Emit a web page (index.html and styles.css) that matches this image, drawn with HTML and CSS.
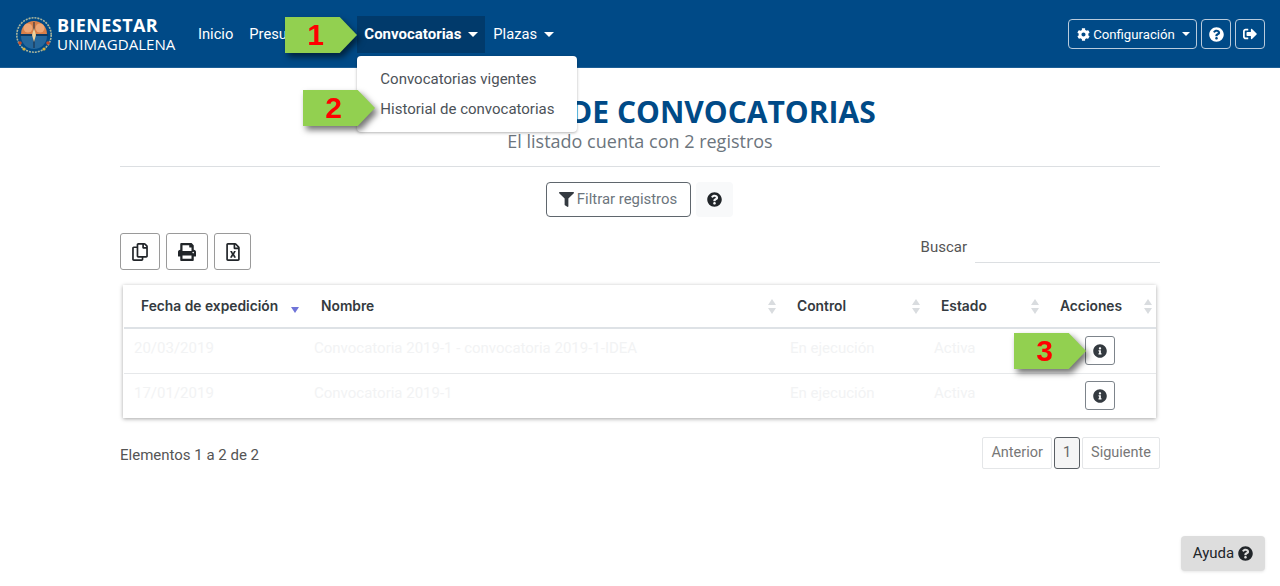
FILE: index.html
```html
<!DOCTYPE html>
<html lang="es">
<head>
<meta charset="utf-8">
<title>Historial de convocatorias</title>
<link rel="stylesheet" href="styles.css">
</head>
<body>
<svg class="defs" width="0" height="0" aria-hidden="true">
  <symbol id="i-question" viewBox="0 0 512 512"><path d="M504 256c0 136.997-111.043 248-248 248S8 392.997 8 256C8 119.083 119.043 8 256 8s248 111.083 248 248zM262.655 90c-54.497 0-89.255 22.957-116.549 63.758-3.536 5.286-2.353 12.415 2.715 16.258l34.699 26.31c5.205 3.947 12.621 3.008 16.665-2.122 17.864-22.658 30.113-35.797 57.303-35.797 20.429 0 45.698 13.148 45.698 32.958 0 14.976-12.363 22.667-32.534 33.976C247.128 238.528 216 254.941 216 296v4c0 6.627 5.373 12 12 12h56c6.627 0 12-5.373 12-12v-1.333c0-28.462 83.186-29.647 83.186-106.667 0-58.002-60.165-102-116.531-102zM256 338c-25.365 0-46 20.635-46 46 0 25.364 20.635 46 46 46s46-20.636 46-46c0-25.365-20.635-46-46-46z"/></symbol>
  <symbol id="i-info" viewBox="0 0 512 512"><path d="M256 8C119.043 8 8 119.083 8 256c0 136.997 111.043 248 248 248s248-111.003 248-248C504 119.083 392.957 8 256 8zm0 110c23.196 0 42 18.804 42 42s-18.804 42-42 42-42-18.804-42-42 18.804-42 42-42zm56 254c0 6.627-5.373 12-12 12h-88c-6.627 0-12-5.373-12-12v-24c0-6.627 5.373-12 12-12h12v-64h-12c-6.627 0-12-5.373-12-12v-24c0-6.627 5.373-12 12-12h64c6.627 0 12 5.373 12 12v100h12c6.627 0 12 5.373 12 12v24z"/></symbol>
</svg>

<header class="navbar">
  <a class="brand">
    <svg class="logo" viewBox="0 0 38 38" aria-hidden="true">
      <circle cx="19" cy="19" r="17.2" fill="none" stroke="#a9b59c" stroke-width="1.6" stroke-dasharray="2 1"/>
      <path d="M6 18a13 13 0 0 1 26 0z" fill="#d9804a"/>
      <path d="M6 20a13 13 0 0 0 26 0z" fill="#25679c"/>
      <circle cx="13" cy="12" r="4.5" fill="#eda676"/>
      <circle cx="25" cy="12" r="4.5" fill="#eda676"/>
      <path d="M5 19h28M19 6v26" stroke="#1a2a40" stroke-width="1"/>
      <path d="M19 12l2 7-2 7-2-7z" fill="#ecd29d"/>
      <circle cx="5" cy="27" r="1.8" fill="#c44a2a"/><circle cx="33" cy="27" r="1.8" fill="#c44a2a"/>
      <circle cx="9" cy="33" r="1.6" fill="#d9b23a"/><circle cx="29" cy="33" r="1.6" fill="#d9b23a"/>
    </svg>
    <span class="brand-text"><b>BIENESTAR</b><span>UNIMAGDALENA</span></span>
  </a>
  <nav class="nav">
    <a class="nav-link">Inicio</a>
    <a class="nav-link caret presupuesto">Presupuesto</a>
    <div class="nav-item">
      <a class="nav-link caret active">Convocatorias</a>
      <div class="dropdown">
        <a>Convocatorias vigentes</a>
        <a>Historial de convocatorias</a>
      </div>
    </div>
    <a class="nav-link caret">Plazas</a>
  </nav>
  <div class="nav-actions">
    <button class="btn-nav caret">
      <svg class="ic ic-13" viewBox="0 0 512 512"><path d="M487.4 315.7l-42.6-24.6c4.3-23.2 4.3-47 0-70.2l42.6-24.6c4.9-2.8 7.1-8.6 5.5-14-11.1-35.6-30-67.8-54.7-94.6-3.8-4.1-10-5.1-14.8-2.3L380.8 110c-17.9-15.4-38.5-27.3-60.8-35.1V25.8c0-5.6-3.9-10.5-9.4-11.7-36.7-8.2-74.3-7.8-109.2 0-5.5 1.2-9.4 6.1-9.4 11.7V75c-22.2 7.9-42.8 19.8-60.8 35.1L88.7 85.5c-4.9-2.8-11-1.9-14.8 2.3-24.7 26.7-43.6 58.9-54.7 94.6-1.7 5.4.6 11.2 5.5 14L67.3 221c-4.3 23.2-4.3 47 0 70.2l-42.6 24.6c-4.9 2.8-7.1 8.6-5.5 14 11.1 35.6 30 67.8 54.7 94.6 3.8 4.1 10 5.1 14.8 2.3l42.6-24.6c17.9 15.4 38.5 27.3 60.8 35.1v49.2c0 5.6 3.9 10.5 9.4 11.7 36.7 8.2 74.3 7.8 109.2 0 5.5-1.2 9.4-6.1 9.4-11.7v-49.2c22.2-7.9 42.8-19.8 60.8-35.1l42.6 24.6c4.9 2.8 11 1.9 14.8-2.3 24.7-26.7 43.6-58.9 54.7-94.6 1.5-5.5-.7-11.3-5.6-14.1zM256 336c-44.1 0-80-35.9-80-80s35.9-80 80-80 80 35.9 80 80-35.9 80-80 80z"/></svg>
      Configuración
    </button>
    <button class="btn-nav square"><svg class="ic ic-15"><use href="#i-question"/></svg></button>
    <button class="btn-nav square"><svg class="ic ic-14" viewBox="0 0 512 512"><path d="M497 273L329 441c-15 15-41 4.5-41-17v-96H152c-13.3 0-24-10.7-24-24v-96c0-13.3 10.7-24 24-24h136V88c0-21.4 25.9-32 41-17l168 168c9.3 9.4 9.3 24.6 0 34zM192 436v-40c0-6.6-5.4-12-12-12H96c-17.7 0-32-14.3-32-32V160c0-17.7 14.3-32 32-32h84c6.6 0 12-5.4 12-12V76c0-6.6-5.4-12-12-12H96c-53 0-96 43-96 96v192c0 53 43 96 96 96h84c6.6 0 12-5.4 12-12z"/></svg></button>
  </div>
</header>

<main class="main">
  <h1 class="title">HISTORIAL DE CONVOCATORIAS</h1>
  <p class="subtitle">El listado cuenta con 2 registros</p>
  <hr class="rule">

  <div class="filter-row">
    <button class="btn-filter">
      <svg class="ic ic-15" viewBox="0 0 512 512"><path d="M487.976 0H24.028C2.71 0-8.047 25.866 7.058 40.971L192 225.941V432c0 7.831 3.821 15.17 10.237 19.662l80 55.98C298.02 518.69 320 507.493 320 487.98V225.941l184.947-184.97C520.021 25.896 509.338 0 487.976 0z"/></svg>
      Filtrar registros
    </button>
    <button class="btn-help"><svg class="ic ic-15"><use href="#i-question"/></svg></button>
  </div>

  <div class="tools-row">
    <div class="tools">
      <button class="btn-tool w-40"><svg class="ic ic-18" viewBox="0 0 448 512"><path d="M433.941 65.941l-51.882-51.882A48 48 0 0 0 348.118 0H176c-26.51 0-48 21.49-48 48v48H48c-26.51 0-48 21.49-48 48v320c0 26.51 21.49 48 48 48h224c26.51 0 48-21.49 48-48v-48h80c26.51 0 48-21.49 48-48V99.882a48 48 0 0 0-14.059-33.941zM266 464H54a6 6 0 0 1-6-6V150a6 6 0 0 1 6-6h74v224c0 26.51 21.49 48 48 48h96v42a6 6 0 0 1-6 6zm128-96H182a6 6 0 0 1-6-6V54a6 6 0 0 1 6-6h106v88c0 13.255 10.745 24 24 24h88v202a6 6 0 0 1-6 6zm6-256h-64V48h9.632c1.591 0 3.117.632 4.243 1.757l48.368 48.368a6 6 0 0 1 1.757 4.243V112z"/></svg></button>
      <button class="btn-tool w-42"><svg class="ic ic-18" viewBox="0 0 512 512"><path d="M448 192V77.25c0-8.49-3.37-16.62-9.37-22.63L393.37 9.37c-6-6-14.14-9.37-22.63-9.37H96C78.33 0 64 14.33 64 32v160c-35.35 0-64 28.65-64 64v112c0 8.84 7.16 16 16 16h48v96c0 17.67 14.33 32 32 32h320c17.67 0 32-14.33 32-32v-96h48c8.84 0 16-7.16 16-16V256c0-35.35-28.65-64-64-64zm-64 256H128v-96h256v96zm0-224H128V64h192v48c0 8.84 7.16 16 16 16h48v96zm48 72c-13.25 0-24-10.75-24-24 0-13.26 10.75-24 24-24s24 10.74 24 24c0 13.25-10.75 24-24 24z"/></svg></button>
      <button class="btn-tool w-37"><svg class="ic ic-18" viewBox="0 0 384 512"><path d="M369.9 97.9L286 14C277 5 264.8-.1 252.1-.1H48C21.5 0 0 21.5 0 48v416c0 26.5 21.5 48 48 48h288c26.5 0 48-21.5 48-48V131.9c0-12.7-5.1-25-14.1-34zM332.1 128H256V51.9l76.1 76.1zM48 464V48h160v104c0 13.3 10.7 24 24 24h104v288H48zm212-240h-28.8c-4.4 0-8.4 2.4-10.5 6.3-18 33.1-22.2 42.4-28.6 57.7-13.9-29.1-6.9-17.3-28.6-57.7-2.1-3.9-6.2-6.3-10.6-6.3H124c-9.3 0-15 10-10.4 18l46.3 78-46.3 78c-4.7 8 1.1 18 10.4 18h28.9c4.4 0 8.4-2.4 10.5-6.3 21.7-40 23-45 28.6-57.7 14.9 30.2 5.9 15.9 28.6 57.7 2.1 3.9 6.2 6.3 10.6 6.3H260c9.3 0 15-10 10.4-18L224 320c.7-1.1 30.3-50.5 46.3-78 4.7-8-1.1-18-10.3-18z"/></svg></button>
    </div>
    <label class="search">Buscar<span class="search-input"></span></label>
  </div>

  <div class="table-card">
    <table class="table">
      <colgroup>
        <col class="c1"><col class="c2"><col class="c3"><col class="c4"><col class="c5">
      </colgroup>
      <thead>
        <tr>
          <th>Fecha de expedición<span class="sort-active"></span></th>
          <th>Nombre<span class="sort"></span></th>
          <th>Control<span class="sort"></span></th>
          <th>Estado<span class="sort"></span></th>
          <th>Acciones<span class="sort"></span></th>
        </tr>
      </thead>
      <tbody>
        <tr>
          <td>20/03/2019</td>
          <td>Convocatoria 2019-1 - convocatoria 2019-1-IDEA</td>
          <td>En ejecución</td>
          <td>Activa</td>
          <td class="cell-action"><button class="btn-info"><svg class="ic ic-14"><use href="#i-info"/></svg></button></td>
        </tr>
        <tr>
          <td>17/01/2019</td>
          <td>Convocatoria 2019-1</td>
          <td>En ejecución</td>
          <td>Activa</td>
          <td class="cell-action"><button class="btn-info"><svg class="ic ic-14"><use href="#i-info"/></svg></button></td>
        </tr>
      </tbody>
    </table>
  </div>

  <div class="table-footer">
    <span class="count">Elementos 1 a 2 de 2</span>
    <div class="pager">
      <a class="page">Anterior</a>
      <a class="page current">1</a>
      <a class="page">Siguiente</a>
    </div>
  </div>
</main>

<button class="btn-ayuda">Ayuda <svg class="ic ic-15"><use href="#i-question"/></svg></button>

<div class="callout callout-1"><div class="callout-shape">1</div></div>
<div class="callout callout-2"><div class="callout-shape">2</div></div>
<div class="callout callout-3"><div class="callout-shape">3</div></div>
</body>
</html>
```

FILE: styles.css
```css
* { box-sizing: border-box; }
html, body { margin: 0; padding: 0; height: 100%; overflow: hidden; }
body { font-family: Roboto, "Liberation Sans", sans-serif; font-size: 15px; color: #495057; background: #fff; position: relative; }
button { font-family: inherit; cursor: pointer; padding: 0; }
.defs { position: absolute; }
.ic { display: inline-block; fill: currentColor; flex: none; }
.ic-13 { width: 13px; height: 13px; }
.ic-14 { width: 14px; height: 14px; }
.ic-15 { width: 15px; height: 15px; }
.ic-18 { width: 18px; height: 18px; }

.navbar { height: 68px; background: #004a87; display: flex; align-items: flex-start; padding: 16px 15px 0; color: #fff; border-bottom: 1px solid #1d5f96; }
.brand { display: flex; align-items: center; width: 175px; height: 37px; flex: none; }
.logo { width: 38px; height: 38px; flex: none; }
.brand-text { display: flex; flex-direction: column; margin-left: 4px; font-family: "Open Sans", sans-serif; line-height: 19px; white-space: nowrap; }
.brand-text b { font-size: 18px; font-weight: 700; letter-spacing: .4px; }
.brand-text span { font-size: 15.1px; }

.nav { display: flex; align-items: flex-start; }
.nav-item { position: relative; }
.nav-link { display: block; height: 37px; line-height: 37px; padding: 0 8px; color: #fff; font-size: 14.7px; white-space: nowrap; }
.nav-link.caret::after, .btn-nav.caret::after { content: ""; display: inline-block; border-top: 5px solid currentColor; border-left: 5px solid transparent; border-right: 5px solid transparent; margin-left: 7px; vertical-align: 2px; }
.presupuesto { width: 116px; overflow: hidden; }
.nav-link.active { background: #013a6b; font-weight: 700; width: 128px; padding-left: 7px; font-size: 15px; }
.dropdown { position: absolute; top: 40px; left: 0; width: 220px; height: 76px; background: #fff; border-radius: 4px; box-shadow: 0 1px 3px rgba(0,0,0,.3); padding: 8px 0; z-index: 5; }
.dropdown a { display: block; padding: 0 23px; height: 30px; line-height: 30px; color: #4c5258; font-size: 15px; white-space: nowrap; }

.nav-actions { margin-left: auto; display: flex; gap: 4px; margin-top: 3px; }
.btn-nav { height: 30px; background: transparent; border: 1px solid #b9cbdc; border-radius: 4px; color: #fff; font-size: 13.2px; display: flex; align-items: center; justify-content: center; }
.btn-nav.caret { width: 129px; gap: 3px; padding-left: 2px; }
.btn-nav.caret::after { margin-left: 4px; border-top-width: 4px; border-left-width: 4px; border-right-width: 4px; }
.btn-nav.square { width: 30px; }

.main { width: 1040px; margin: 0 auto; padding-top: 26px; }
.title { margin: 0; font-family: "Open Sans", sans-serif; font-size: 30px; font-weight: 700; line-height: 36px; color: #004a87; text-align: center; }
.subtitle { margin: -1px 0 0; font-family: "Open Sans", sans-serif; font-size: 18px; line-height: 24px; color: #6c757d; text-align: center; }
.rule { border: 0; border-top: 1px solid #dcdfe2; margin: 13px 0 15px; }

.filter-row { display: flex; justify-content: center; gap: 5px; padding-right: 2px; }
.btn-filter { width: 145px; height: 35px; background: #fff; border: 1px solid #5f666d; border-radius: 4px; color: #6c757d; font-size: 14.9px; padding-bottom: 1px; display: flex; align-items: center; justify-content: center; gap: 3px; }
.btn-filter .ic { color: #343a40; }
.btn-help { width: 37px; height: 35px; background: #f8f9fa; border: 0; border-radius: 4px; color: #212529; display: flex; align-items: center; justify-content: center; }

.tools-row { display: flex; justify-content: space-between; align-items: flex-start; margin-top: 16px; }
.tools { display: flex; gap: 6px; }
.btn-tool { height: 37px; background: #fff; border: 1px solid #9a9a9a; border-radius: 3px; color: #212529; display: flex; align-items: center; justify-content: center; }
.w-40 { width: 40px; } .w-42 { width: 42px; } .w-37 { width: 37px; }
.search { display: flex; align-items: flex-start; color: #555; font-size: 15px; line-height: 29px; }
.search-input { display: block; width: 185px; height: 30px; margin-left: 8px; border-bottom: 1px solid #dcdfe2; }

.table-card { margin: 15px 4px 0 3px; box-shadow: 0 1px 4px rgba(0,0,0,.35); background: #fff; padding-left: 1px; }
.table { width: 100%; border-collapse: collapse; table-layout: fixed; }
.c1 { width: 180px; } .c2 { width: 476px; } .c3 { width: 144px; } .c4 { width: 119px; } .c5 { width: auto; }
.table th { position: relative; height: 43px; padding: 0 0 0 17px; text-align: left; font-family: Inter, Roboto, sans-serif; font-size: 13.8px; font-weight: 600; color: #343a40; border-bottom: 2px solid #dee2e6; white-space: nowrap; }
.table td { height: 45px; padding: 0 0 6px 10px; font-size: 15px; color: #f2f3f4; border-bottom: 1px solid #e6e8ea; white-space: nowrap; }
.table tbody tr:last-child td { border-bottom: 0; }
.sort { position: absolute; right: 3px; top: 14px; width: 9px; height: 15px; }
.sort::before, .sort::after { content: ""; position: absolute; left: 0; border-left: 4.5px solid transparent; border-right: 4.5px solid transparent; }
.sort::before { top: 0; border-bottom: 6px solid #d9dcdf; }
.sort::after { bottom: 0; border-top: 6px solid #d9dcdf; }
.sort-active { position: absolute; right: 5px; top: 22px; border-left: 4.5px solid transparent; border-right: 4.5px solid transparent; border-top: 6px solid #6f74d8; }
.table td.cell-action { padding: 0; text-align: center; }
.btn-info { width: 30px; height: 29px; background: #fff; border: 1px solid #7d848b; border-radius: 3px; color: #343a40; display: inline-flex; align-items: center; justify-content: center; vertical-align: middle; }

.table-footer { display: flex; justify-content: space-between; align-items: flex-start; margin-top: 18px; }
.count { font-size: 15px; color: #555; line-height: 39px; }
.pager { display: flex; gap: 2px; padding-top: 1px; }
.page { height: 32px; line-height: 30px; padding: 0 8px; border: 1px solid #e4e6e8; border-radius: 2px; color: #777; font-size: 14.5px; }
.page.current { background: #f5f5f5; border-color: #5a5f64; color: #666; border-radius: 3px; }

.btn-ayuda { position: absolute; left: 1181px; top: 536px; width: 84px; height: 35px; background: #ddd; border: 0; border-radius: 4px; color: #212529; font-size: 15px; padding-bottom: 1px; display: flex; align-items: center; justify-content: center; gap: 4px; box-shadow: 0 1px 3px rgba(0,0,0,.1); }

.callout { position: absolute; filter: drop-shadow(3px 4px 3px rgba(0,0,0,.55)); z-index: 10; }
.callout-shape { width: 72px; height: 36px; background: #92d050; clip-path: polygon(0 0, 76% 0, 100% 50%, 76% 100%, 0 100%); color: #f00; font-family: "Liberation Sans", sans-serif; font-size: 30px; font-weight: 700; line-height: 36px; text-align: center; padding-right: 11px; }
.callout-1 { left: 285px; top: 17px; }
.callout-2 { left: 303px; top: 90px; }
.callout-3 { left: 1014px; top: 333px; }
```
